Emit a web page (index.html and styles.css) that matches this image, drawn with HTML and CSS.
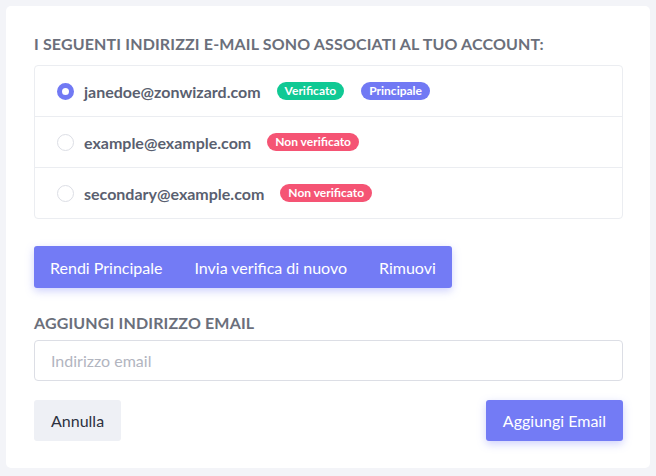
FILE: index.html
```html
<!DOCTYPE html>
<html lang="it">
<head>
    <meta charset="UTF-8">
    <meta name="viewport" content="width=device-width, initial-scale=1.0">
    <title>Indirizzi email</title>
    <link rel="stylesheet" href="styles.css">
</head>
<body>
    <div class="scheda">
        <h2 class="titolo">I seguenti indirizzi e-mail sono associati al tuo account:</h2>
        <div class="lista">
            <label class="riga">
                <span class="radio radio-attivo"></span>
                <span class="email">janedoe@zonwizard.com</span>
                <span class="badge badge-verde">Verificato</span>
                <span class="badge badge-viola">Principale</span>
            </label>
            <label class="riga">
                <span class="radio"></span>
                <span class="email">example@example.com</span>
                <span class="badge badge-rosso">Non verificato</span>
            </label>
            <label class="riga">
                <span class="radio"></span>
                <span class="email">secondary@example.com</span>
                <span class="badge badge-rosso">Non verificato</span>
            </label>
        </div>
        <div class="gruppo">
            <button class="gruppo-btn">Rendi Principale</button>
            <button class="gruppo-btn">Invia verifica di nuovo</button>
            <button class="gruppo-btn">Rimuovi</button>
        </div>
        <h2 class="titolo titolo-aggiungi">Aggiungi indirizzo email</h2>
        <input class="campo" type="email" placeholder="Indirizzo email">
        <div class="azioni">
            <button class="btn btn-grigio">Annulla</button>
            <button class="btn btn-viola">Aggiungi Email</button>
        </div>
    </div>
</body>
</html>
```

FILE: styles.css
```css
body {
    margin: 0;
    padding: 6px;
    background-color: #f3f4f8;
    font-family: Lato, "Open Sans", sans-serif;
}

.scheda {
    background-color: #fff;
    border-radius: 5px;
    padding: 28px 27px 27px 28px;
    height: 407px;
}

.titolo {
    margin: 0 0 11px;
    font-size: 16px;
    font-weight: 700;
    line-height: 20px;
    letter-spacing: 0.15px;
    text-transform: uppercase;
    color: #6b6f7b;
}

.lista {
    border: 1px solid #ebedf1;
    border-radius: 4px;
}

.riga {
    display: flex;
    align-items: center;
    height: 50px;
    padding: 0 22px;
    border-top: 1px solid #ebedf1;
}

.riga:first-child {
    border-top: none;
}

.radio {
    width: 17px;
    height: 17px;
    border: 1px solid #dcdee5;
    border-radius: 50%;
    box-sizing: border-box;
    margin-right: 10px;
}

.radio-attivo {
    border: 5px solid #7179f4;
    background-color: #fff;
}

.email {
    font-size: 16px;
    font-weight: 700;
    color: #5a5f70;
    margin-right: 16px;
}

.badge {
    font-size: 12px;
    font-weight: 700;
    line-height: 18px;
    color: #fff;
    padding: 0 8px;
    border-radius: 9px;
    margin-right: 17px;
}

.badge-verde {
    background-color: #10c994;
}

.badge-viola {
    background-color: #7179f4;
}

.badge-rosso {
    background-color: #f55474;
}

.gruppo {
    display: inline-flex;
    margin-top: 27px;
    background-color: #737bf5;
    border-radius: 3px;
    box-shadow: 0 3px 8px rgba(115, 123, 245, 0.35);
}

.gruppo-btn {
    height: 42px;
    padding: 0 16px;
    border: none;
    background: none;
    font-family: inherit;
    font-size: 16px;
    color: #fff;
    cursor: pointer;
}

.titolo-aggiungi {
    margin-top: 25px;
    margin-bottom: 7px;
}

.campo {
    display: block;
    width: 100%;
    box-sizing: border-box;
    height: 41px;
    padding: 0 16px;
    border: 1px solid #dcdee5;
    border-radius: 4px;
    font-family: inherit;
    font-size: 16px;
    color: #5a5f70;
    outline: none;
}

.campo::placeholder {
    color: #b2b5bf;
}

.azioni {
    display: flex;
    justify-content: space-between;
    margin-top: 19px;
}

.btn {
    height: 41px;
    padding: 0 17px;
    border: none;
    border-radius: 3px;
    font-family: inherit;
    font-size: 16px;
    cursor: pointer;
}

.btn-grigio {
    background-color: #eef0f5;
    color: #2d3140;
}

.btn-viola {
    background-color: #737bf5;
    color: #fff;
    box-shadow: 0 3px 8px rgba(115, 123, 245, 0.35);
}
```
